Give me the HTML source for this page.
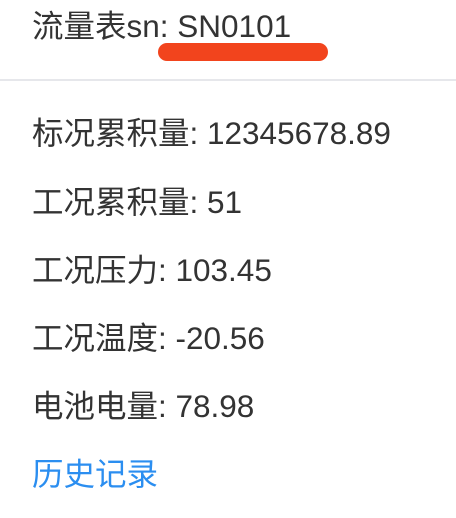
<!DOCTYPE html>
<html><head><meta charset="utf-8"><style>
html,body{margin:0;padding:0;background:#fff;width:456px;height:518px;overflow:hidden}
body{font-family:"Liberation Sans","Noto Sans CJK SC",sans-serif;color:#333;font-size:31.5px}
.t{position:absolute;left:32px;white-space:nowrap;line-height:32px}
</style></head><body>
<div class="t" style="top:10px">流量表sn: SN0101</div>
<div style="position:absolute;left:158px;top:43px;width:170px;height:18px;border-radius:9px;background:#f2441d"></div>
<div style="position:absolute;left:0;top:79px;width:456px;height:2px;background:#e6e7eb"></div>
<div class="t" style="top:117px">标况累积量: 12345678.89</div>
<div class="t" style="top:186px">工况累积量: 51</div>
<div class="t" style="top:254px">工况压力: 103.45</div>
<div class="t" style="top:322px">工况温度: -20.56</div>
<div class="t" style="top:390px">电池电量: 78.98</div>
<div class="t" style="top:458px;color:#2b8ef0">历史记录</div>
</body></html>
